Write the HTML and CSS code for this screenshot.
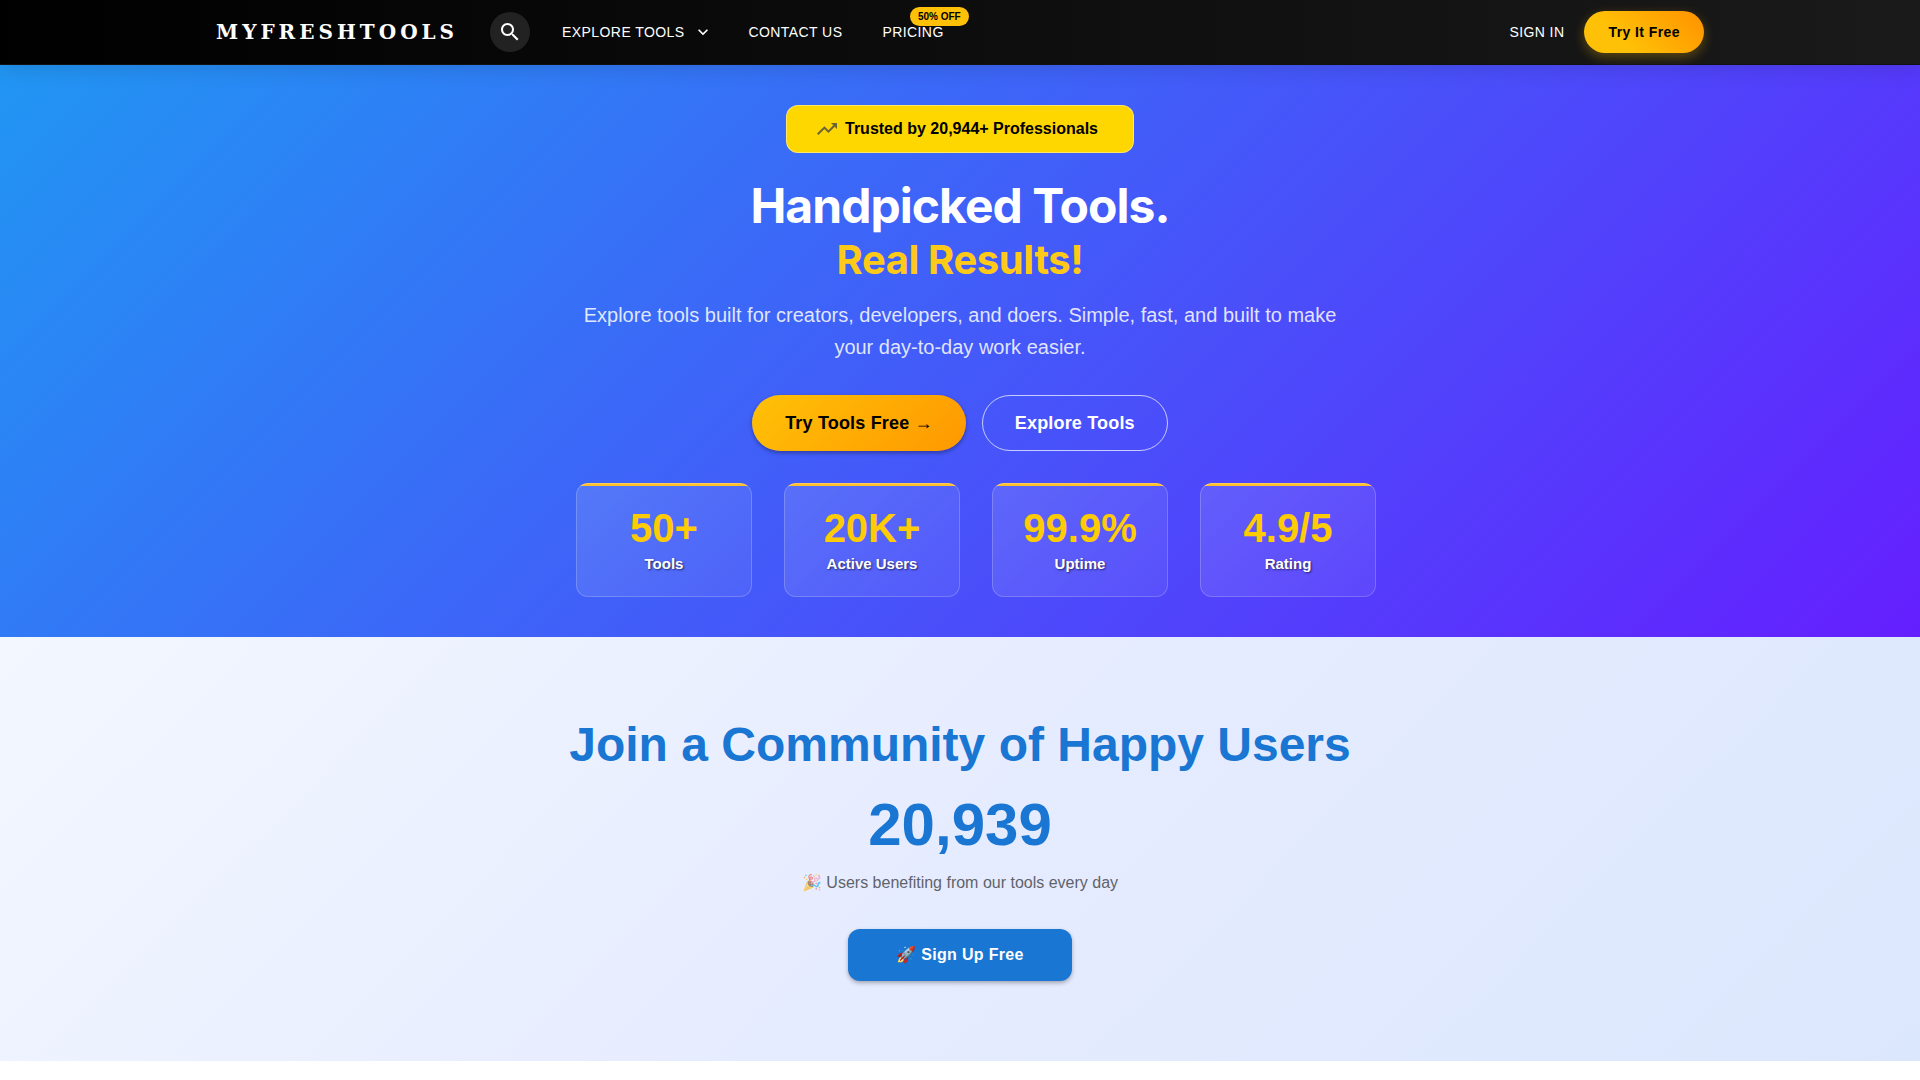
FILE: index.html
```html
<!DOCTYPE html>
<html lang="en">
<head>
    <meta charset="UTF-8">
    <meta name="viewport" content="width=device-width, initial-scale=1.0">
    <title>MyFreshTools</title>
    <link rel="stylesheet" href="styles.css">
</head>
<body>
    <header class="navbar">
        <div class="navbar-inner">
            <a class="logo" href="#">MYFRESHTOOLS</a>
            <button class="search-btn" type="button" aria-label="Search">
                <svg width="24" height="24" viewBox="0 0 24 24" fill="currentColor"><path d="M15.5 14h-.79l-.28-.27C15.41 12.59 16 11.11 16 9.5 16 5.91 13.09 3 9.5 3S3 5.91 3 9.5 5.91 16 9.5 16c1.61 0 3.09-.59 4.23-1.57l.27.28v.79l5 4.99L20.49 19l-4.99-5zm-6 0C7.01 14 5 11.99 5 9.5S7.01 5 9.5 5 14 7.01 14 9.5 11.99 14 9.5 14z"/></svg>
            </button>
            <nav class="nav-links">
                <button class="nav-item nav-menu" type="button">
                    EXPLORE TOOLS
                    <svg width="20" height="20" viewBox="0 0 24 24" fill="currentColor"><path d="M7.41 8.59 12 13.17l4.59-4.58L18 10l-6 6-6-6z"/></svg>
                </button>
                <a class="nav-item" href="#contact">CONTACT US</a>
                <a class="nav-item" href="#pricing">PRICING<span class="sale-badge">50% OFF</span></a>
            </nav>
            <div class="nav-actions">
                <a class="nav-item" href="#signin">SIGN IN</a>
                <button class="try-btn" type="button">Try It Free</button>
            </div>
        </div>
    </header>

    <main>
        <section class="hero">
            <div class="trust-badge">
                <svg width="24" height="24" viewBox="0 0 24 24" fill="currentColor"><path d="m16 6 2.29 2.29-4.88 4.88-4-4L2 16.59 3.41 18l6-6 4 4 6.3-6.29L22 12V6z"/></svg>
                <span>Trusted by 20,944+ Professionals</span>
            </div>
            <h1 class="hero-title">Handpicked Tools. <span>Real Results!</span></h1>
            <p class="hero-text">Explore tools built for creators, developers, and doers. Simple, fast, and built to make your day-to-day work easier.</p>
            <div class="hero-buttons">
                <button class="primary-btn" type="button">Try Tools Free →</button>
                <button class="outline-btn" type="button">Explore Tools</button>
            </div>
            <div class="stats">
                <div class="stat-card">
                    <div class="stat-value">50+</div>
                    <div class="stat-label">Tools</div>
                </div>
                <div class="stat-card">
                    <div class="stat-value">20K+</div>
                    <div class="stat-label">Active Users</div>
                </div>
                <div class="stat-card">
                    <div class="stat-value">99.9%</div>
                    <div class="stat-label">Uptime</div>
                </div>
                <div class="stat-card">
                    <div class="stat-value">4.9/5</div>
                    <div class="stat-label">Rating</div>
                </div>
            </div>
        </section>

        <section class="community">
            <h2>Join a Community of Happy Users</h2>
            <div class="user-count">20,939</div>
            <p class="community-text"><span class="emoji">🎉</span> Users benefiting from our tools every day</p>
            <button class="signup-btn" type="button">🚀 Sign Up Free</button>
        </section>
    </main>
</body>
</html>
```
FILE: styles.css
```css
* {
    box-sizing: border-box;
}
body {
    margin: 0;
    font-family: "Liberation Sans", Arial, sans-serif;
    background: #fff;
}
button {
    font-family: inherit;
    border: none;
    cursor: pointer;
}
a {
    color: inherit;
    text-decoration: none;
}
h1, h2, p {
    margin: 0;
}

/* navbar */
.navbar {
    position: relative;
    z-index: 1;
    border-bottom: 1px solid #111;
    color: #fff;
    background: linear-gradient(90deg, #000, #1a1a1a);
    box-shadow: 0 4px 20px rgba(0, 0, 0, 0.12);
}
.navbar-inner {
    display: flex;
    align-items: center;
    max-width: 1536px;
    min-height: 64px;
    margin: 0 auto;
    padding: 0 24px;
}
.logo {
    margin-right: 32px;
    font-family: "DejaVu Serif", serif;
    font-size: 20px;
    font-weight: 700;
    letter-spacing: 4px;
}
.search-btn {
    display: flex;
    align-items: center;
    justify-content: center;
    width: 40px;
    height: 40px;
    padding: 0;
    border-radius: 50%;
    color: #fff;
    background: #222;
}
.nav-links {
    display: flex;
    gap: 40px;
    margin-left: 32px;
}
.nav-item {
    display: flex;
    align-items: center;
    gap: 8px;
    position: relative;
    padding: 0;
    color: #fff;
    background: none;
    font-size: 14px;
    line-height: 24px;
    letter-spacing: 0.03em;
}
.nav-menu svg {
    margin-right: -4px;
}
.sale-badge {
    position: absolute;
    top: -13px;
    right: -25px;
    padding: 0 8px;
    border-radius: 10px;
    color: #000;
    background: #ffc107;
    font-size: 10px;
    font-weight: 700;
    line-height: 19px;
    letter-spacing: 0;
    white-space: nowrap;
}
.nav-actions {
    display: flex;
    align-items: center;
    gap: 20px;
    margin-left: auto;
}
.try-btn {
    padding: 0 24px;
    border-radius: 24px;
    color: #000;
    background: linear-gradient(45deg, #ffc107 30%, #ff9800 90%);
    box-shadow: 0 4px 12px rgba(255, 193, 7, 0.3);
    font-size: 14px;
    font-weight: 700;
    line-height: 42px;
    letter-spacing: 0.03em;
}

/* hero */
.hero {
    display: flex;
    flex-direction: column;
    align-items: center;
    padding: 40px 24px;
    color: #fff;
    background: linear-gradient(135deg, #2196f3 0%, #651fff 100%);
    text-align: center;
}
.trust-badge {
    display: flex;
    align-items: center;
    gap: 6px;
    padding: 11px 35px 11px 28px;
    border: 1px solid rgba(255, 255, 255, 0.4);
    border-radius: 12px;
    color: #000;
    background: #ffd700;
    font-size: 16px;
    font-weight: 700;
    line-height: 24px;
}
.trust-badge svg {
    color: #6b6433;
}
.hero-title {
    margin-top: 24px;
    font-family: Inter, sans-serif;
    font-size: 48px;
    font-weight: 700;
    line-height: 58px;
    letter-spacing: -0.02em;
}
.hero-title span {
    display: block;
    color: #ffc917;
    font-size: 40px;
    line-height: 50px;
    letter-spacing: -0.01em;
}
.hero-text {
    max-width: 800px;
    margin-top: 14px;
    padding: 0 16px;
    color: rgba(255, 255, 255, 0.85);
    font-size: 20px;
    line-height: 32px;
}
.hero-buttons {
    display: flex;
    gap: 16px;
    margin-top: 32px;
}
.primary-btn, .outline-btn {
    padding: 0 32px;
    border: 1px solid rgba(255, 255, 255, 0.7);
    border-radius: 28px;
    font-size: 18px;
    font-weight: 700;
    line-height: 54px;
    letter-spacing: 0.01em;
}
.primary-btn {
    border-color: transparent;
    color: #000;
    background: linear-gradient(135deg, #ffc107, #ff9800) border-box;
    box-shadow: 0 2px 4px rgba(0, 0, 0, 0.35);
}
.outline-btn {
    color: #fff;
    background: none;
}
.stats {
    display: flex;
    gap: 32px;
    width: 100%;
    max-width: 768px;
    margin-top: 32px;
}
.stat-card {
    flex: 0 0 176px;
    padding: 24px 8px 20px;
    overflow: hidden;
    border: 1px solid rgba(255, 255, 255, 0.2);
    border-radius: 12px;
    background: linear-gradient(#ffc02e, #ffc02e) top / 100% 3px no-repeat border-box,
        linear-gradient(135deg, rgba(255, 255, 255, 0.12), rgba(255, 255, 255, 0.06)) border-box;
}
.stat-value {
    color: #ffcb05;
    font-size: 40px;
    font-weight: 700;
    line-height: 40px;
}
.stat-label {
    margin-top: 4px;
    font-size: 15px;
    font-weight: 700;
    line-height: 24px;
    text-shadow: 1px 1px 2px rgba(0, 0, 0, 0.6);
}

/* community */
.community {
    display: flex;
    flex-direction: column;
    align-items: center;
    padding: 80px 24px;
    background: linear-gradient(135deg, #f3f7ff 0%, #e6ecff 50%, #dbe7fd 100%);
    text-align: center;
}
.community h2 {
    color: #1976d2;
    font-size: 48px;
    line-height: 56px;
}
.user-count {
    margin-top: 16px;
    color: #1976d2;
    font-size: 60px;
    font-weight: 700;
    line-height: 72px;
}
.community-text {
    margin-top: 8px;
    color: #5f636b;
    font-size: 16px;
    line-height: 28px;
}
.emoji {
    opacity: 0.6;
}
.signup-btn {
    margin-top: 32px;
    padding: 0 48px;
    border-radius: 12px;
    color: #fff;
    background: #1976d2;
    box-shadow: 0 2px 4px rgba(0, 0, 0, 0.3);
    font-size: 16px;
    font-weight: 700;
    line-height: 52px;
    letter-spacing: 0.02em;
}
```
